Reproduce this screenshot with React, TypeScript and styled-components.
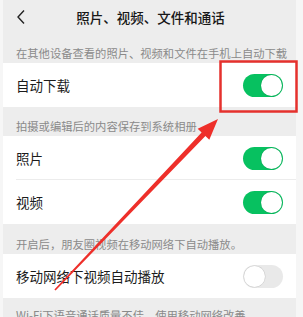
import styled, { createGlobalStyle } from 'styled-components';

const GlobalStyle = createGlobalStyle`
  html, body {
    margin: 0;
    padding: 0;
    background: #f6f6f6;
    font-family: 'Noto Sans CJK SC', 'Noto Sans', sans-serif;
  }
`;

const Screen = styled.div`
  position: relative;
  width: 303px;
  height: 317px;
  overflow: hidden;
  background: #f6f6f6;
`;

const Panel = styled.div`
  margin: 0 7px 0 3px;
  background: #ededed;
  display: flex;
  flex-direction: column;
`;

const Header = styled.div`
  height: 36px;
  display: flex;
  align-items: center;
  justify-content: center;
  position: relative;
`;

const Back = styled.svg`
  position: absolute;
  left: 13px;
  top: 9px;
`;

const Title = styled.div`
  font-size: 13.5px;
  font-weight: 500;
  color: #181818;
  margin-left: 2px;
  margin-top: -2px;
`;

const Note = styled.div<{ $h: number }>`
  height: ${(p) => p.$h}px;
  box-sizing: border-box;
  display: flex;
  align-items: flex-end;
  padding: 0 13px 2px;
  font-size: 11.3px;
  color: #8a8a8a;
  white-space: nowrap;
  overflow: hidden;
`;

const Row = styled.div<{ $divider?: boolean }>`
  height: 44px;
  background: #fff;
  display: flex;
  align-items: center;
  justify-content: space-between;
  padding: 0 13px;
  position: relative;
  font-size: 13.5px;
  color: #1c1c1c;

  &::after {
    content: '';
    display: ${(p) => (p.$divider ? 'block' : 'none')};
    position: absolute;
    left: 13px;
    right: 0;
    bottom: 0;
    height: 1px;
    background: #ececec;
  }
`;

const Toggle = styled.div<{ $on: boolean }>`
  width: 40px;
  height: 23px;
  border-radius: 12px;
  background: ${(p) => (p.$on ? '#07c160' : '#e9e9e9')};
  position: relative;
  flex-shrink: 0;

  &::after {
    content: '';
    position: absolute;
    top: 1px;
    left: ${(p) => (p.$on ? '18px' : '1px')};
    width: 21px;
    height: 21px;
    border-radius: 50%;
    background: #fff;
    box-shadow: 0 0 0 0.5px rgba(0, 0, 0, 0.12);
  }
`;

const Overlay = styled.svg`
  position: absolute;
  left: 0;
  top: 0;
  pointer-events: none;
`;

function arrowPoints() {
  const tail = [55, 290];
  const tip = [218, 119];
  const dx = tip[0] - tail[0];
  const dy = tip[1] - tail[1];
  const len = Math.hypot(dx, dy);
  const ux = dx / len;
  const uy = dy / len;
  const nx = -uy;
  const ny = ux;
  const bx = tip[0] - ux * 21;
  const by = tip[1] - uy * 21;
  const pts = [
    [tail[0] + nx * 0.8, tail[1] + ny * 0.8],
    [bx + nx * 2.6, by + ny * 2.6],
    [bx + nx * 8, by + ny * 8],
    tip,
    [bx - nx * 8, by - ny * 8],
    [bx - nx * 2.6, by - ny * 2.6],
    [tail[0] - nx * 0.8, tail[1] - ny * 0.8],
  ];
  return pts.map((p) => p.map((v) => v.toFixed(1)).join(',')).join(' ');
}

export default function App() {
  return (
    <Screen>
      <GlobalStyle />
      <Panel>
        <Header>
          <Back width="10" height="16" viewBox="0 0 10 16">
            <path d="M8 1.5 L2 8 L8 14.5" fill="none" stroke="#222" strokeWidth="1.4" />
          </Back>
          <Title>照片、视频、文件和通话</Title>
        </Header>
        <Note $h={27}>在其他设备查看的照片、视频和文件在手机上自动下载</Note>
        <Row>
          自动下载
          <Toggle $on />
        </Row>
        <Note $h={29}>拍摄或编辑后的内容保存到系统相册</Note>
        <Row $divider>
          照片
          <Toggle $on />
        </Row>
        <Row>
          视频
          <Toggle $on />
        </Row>
        <Note $h={30}>开启后，朋友圈视频在移动网络下自动播放。</Note>
        <Row>
          移动网络下视频自动播放
          <Toggle $on={false} />
        </Row>
        <Note $h={27}>Wi-Fi下语音通话质量不佳，使用移动网络改善</Note>
      </Panel>
      <Overlay width="303" height="317">
        <rect x="220.5" y="61.5" width="76" height="50" fill="none" stroke="#e5312d" strokeWidth="2.5" />
        <polygon points={arrowPoints()} fill="#ee2f2a" />
      </Overlay>
    </Screen>
  );
}
